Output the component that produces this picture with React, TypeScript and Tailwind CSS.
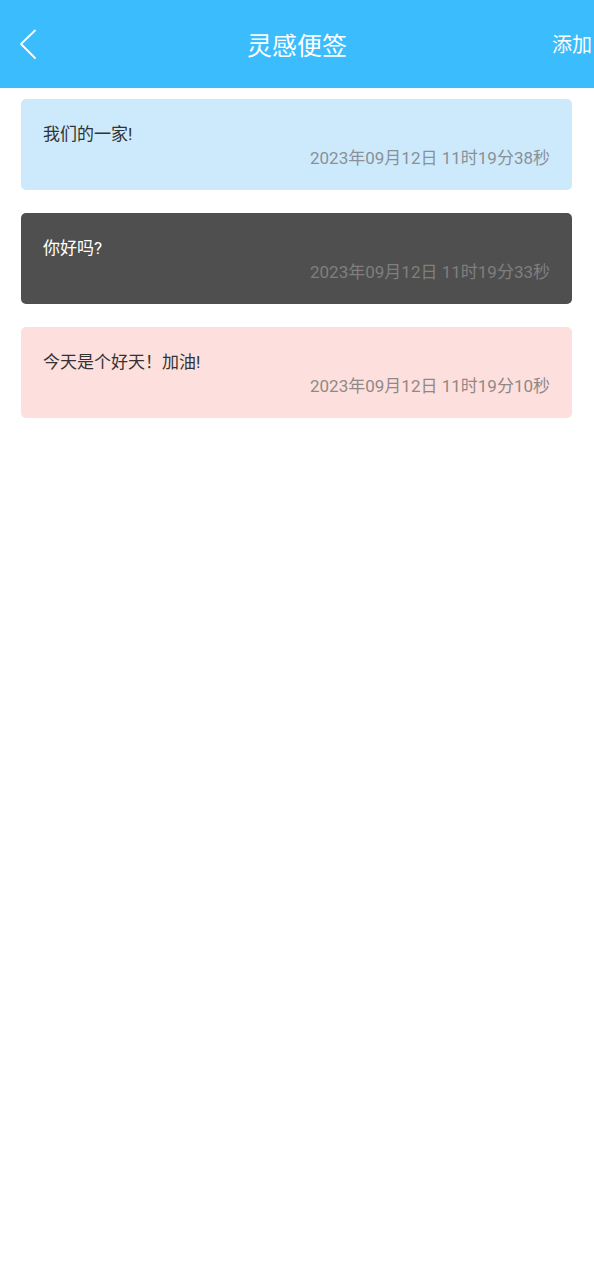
import React from "react";

const notes = [
  { text: "我们的一家!", time: "2023年09月12日 11时19分38秒", bg: "bg-[#cdeafd]", fg: "text-[#333333]", tc: "text-[#8a9096]" },
  { text: "你好吗?", time: "2023年09月12日 11时19分33秒", bg: "bg-[#4f4f4f]", fg: "text-[#ffffff]", tc: "text-[#7f7f7f]" },
  { text: "今天是个好天！加油!", time: "2023年09月12日 11时19分10秒", bg: "bg-[#fde0de]", fg: "text-[#333333]", tc: "text-[#918886]" },
];

export default function App() {
  return (
    <div
      className="w-[594px] min-h-[1280px] bg-white"
      style={{ fontFamily: 'Roboto, "Noto Sans CJK SC", sans-serif' }}
    >
      <div className="relative h-[88px] bg-[#3bbcfd] flex items-center justify-center">
        <svg className="absolute left-[18px] top-[29px]" width="22" height="32" viewBox="0 0 22 32" fill="none">
          <path d="M17 1.5 L3 15 L17 29" stroke="white" strokeWidth="1.8" strokeLinecap="round" strokeLinejoin="round" />
        </svg>
        <span className="text-white text-[25px] leading-none mt-[4px]">灵感便签</span>
        <span className="absolute right-[2px] top-[35px] text-white text-[20px] leading-none">添加</span>
      </div>
      <div className="flex flex-col gap-[23px] mt-[11px] ml-[21px] mr-[22px]">
        {notes.map((n, i) => (
          <div key={i} className={`${n.bg} rounded-[5px] pt-[25px] pb-[20px] px-[22px] flex flex-col`}>
            <div className={`${n.fg} text-[17px] leading-[20px]`}>{n.text}</div>
            <div className={`${n.tc} text-[17px] leading-[24px] mt-[2px] text-right`}>{n.time}</div>
          </div>
        ))}
      </div>
    </div>
  );
}
